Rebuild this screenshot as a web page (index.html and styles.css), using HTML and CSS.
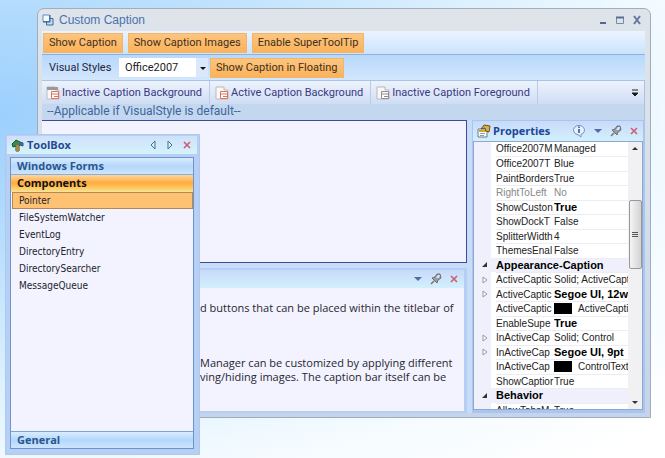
FILE: index.html
```html
<!DOCTYPE html>
<html lang="en">
<head>
<meta charset="utf-8">
<title>Custom Caption</title>
<link rel="stylesheet" href="styles.css">
</head>
<body>
<svg class="defs" aria-hidden="true">
  <symbol id="pin" viewBox="0 0 12 12"><path d="M1 11 4 8" stroke="#777" stroke-width="1.6"/><path d="M2 5 7 10 8 7 11 5 10 1 7 1 5 4Z" fill="#9a9ca3" stroke="#6b6e77"/><path d="M6 5 8 2H10L9 5Z" fill="#dfe4ee"/></symbol>
  <symbol id="close" viewBox="0 0 10 10"><path d="M2 2 8 8M8 2 2 8" stroke="#cf5c72" stroke-width="1.6"/></symbol>
  <symbol id="down" viewBox="0 0 10 10"><path d="M1 3H9L5 7Z" fill="#4b6da8"/></symbol>
  <symbol id="sheet" viewBox="0 0 14 14"><path d="M1 1H9V4H13V13H1Z" fill="#fbf7f5" stroke="#b9b9bd"/><path d="M5.5 5.5H12.500V12.500H5.500ZM5.500 8H12.500M8 10.500H12" fill="#fff" stroke="currentColor"/></symbol>
</svg>

<main class="window">
  <header class="titlebar">
    <svg class="app-icon" viewBox="0 0 12 12"><path d="M4.500 4.500H11V11H4.500Z" fill="#c5dbf0" stroke="#3b699d"/><path d="M1 1H7.500V7.500H1Z" fill="#f5faff" stroke="#658db8"/><path d="M1 8H8V1" fill="none" stroke="#315f94"/></svg>
    <h1>Custom Caption</h1>
    <div class="window-buttons">
      <button aria-label="Minimize"><svg viewBox="0 0 10 10"><path d="M2 8H8" stroke="#596687" stroke-width="2"/></svg></button>
      <button aria-label="Maximize"><svg viewBox="0 0 10 10"><path d="M1.500 2V8.500H8.500V2" fill="none" stroke="#7a8aa8"/><path d="M1 2.500H9" stroke="#596f92" stroke-width="2"/></svg></button>
      <button aria-label="Close"><svg viewBox="0 0 10 10"><path d="M2 1 8 9M8 1 2 9" stroke="#68779e" stroke-width="2"/></svg></button>
    </div>
  </header>

  <div class="toolbar captions">
    <button class="toggle">Show Caption</button>
    <button class="toggle">Show Caption Images</button>
    <button class="toggle">Enable SuperToolTip</button>
  </div>
  <div class="toolbar visual">
    <label for="style">Visual Styles</label>
    <span class="picker"><select id="style"><option>Office2007</option></select><svg viewBox="0 0 10 10"><path d="M2 4H8L5 7Z" fill="#111"/></svg></span>
    <button class="toggle">Show Caption in Floating</button>
  </div>
  <div class="brushes">
    <div class="brush-row">
      <button><svg><use href="#sheet"/><path d="M1 1H12V4H1Z" fill="#999"/></svg>Inactive Caption Background</button>
      <button><svg><use href="#sheet"/></svg>Active Caption Background</button>
      <button><svg class="gray"><use href="#sheet"/></svg>Inactive Caption Foreground</button>
      <button class="overflow" aria-label="More"><svg viewBox="0 0 8 8"><path d="M1 1H7M1 4H7L4 7Z" stroke="#222" fill="#111"/></svg></button>
    </div>
    <p class="note">--Applicable if VisualStyle is default--</p>
  </div>

  <div class="workspace">
    <div class="left">
      <section class="canvas"></section>
      <section class="description">
        <header class="pane-head">
          <button aria-label="Menu"><svg><use href="#down"/></svg></button>
          <button aria-label="Auto hide"><svg class="pin"><use href="#pin"/></svg></button>
          <button aria-label="Close"><svg><use href="#close"/></svg></button>
        </header>
        <div class="copy">
          <p>d buttons that can be placed within the titlebar of</p>
          <p>Manager can be customized by applying different<br>ving/hiding images. The caption bar itself can be</p>
        </div>
      </section>
    </div>
    <section class="properties">
      <header class="pane-head">
        <svg class="prop-icon" viewBox="0 0 14 14"><path d="M1 5H10V13H1Z" fill="#fff" stroke="#687991"/><path d="M2 7H9" stroke="#d4a52c" stroke-width="2"/><path d="M3 9.500H8M3 11.500H7" stroke="#8b9aab"/><path d="M4 5 7 1 13 2 12 8 9 7 8 4Z" fill="#d7b346" stroke="#66521e"/></svg>
        <h2>Properties</h2>
        <button aria-label="Information"><svg class="info" viewBox="0 0 14 14"><path d="M5 10.500A5.500 4.700 0 1 1 9 10.500L9 13 6 10.700Z" fill="#e6f0ff" stroke="#778fb7"/><path d="M7 2.500V4M7 5V9" stroke="#2855b5" stroke-width="1.600"/></svg></button>
        <button aria-label="Menu"><svg><use href="#down"/></svg></button>
        <button aria-label="Auto hide"><svg class="pin"><use href="#pin"/></svg></button>
        <button aria-label="Close"><svg><use href="#close"/></svg></button>
      </header>
      <div class="grid-area">
        <div class="grid-clip">
        <table>
          <colgroup><col class="c-mark"><col class="c-name"><col></colgroup>
          <tbody>
          <tr><td></td><td>Office2007M</td><td>Managed</td></tr>
          <tr><td></td><td>Office2007T</td><td>Blue</td></tr>
          <tr><td></td><td>PaintBorders</td><td>True</td></tr>
          <tr class="off"><td></td><td>RightToLeft</td><td>No</td></tr>
          <tr><td></td><td>ShowCuston</td><td><b>True</b></td></tr>
          <tr><td></td><td>ShowDockT</td><td>False</td></tr>
          <tr><td></td><td>SplitterWidth</td><td>4</td></tr>
          <tr><td></td><td>ThemesEnal</td><td>False</td></tr>
          <tr class="group"><td><svg viewBox="0 0 8 8"><path d="M6 1V6H1Z" fill="#333"/></svg></td><th colspan="2">Appearance-Caption</th></tr>
          <tr><td><svg viewBox="0 0 8 8"><path d="M2 1 6 4 2 7Z" fill="#fff" stroke="#999"/></svg></td><td>ActiveCaptic</td><td>Solid; ActiveCapt</td></tr>
          <tr><td><svg viewBox="0 0 8 8"><path d="M2 1 6 4 2 7Z" fill="#fff" stroke="#999"/></svg></td><td>ActiveCaptic</td><td><b>Segoe UI, 12w</b></td></tr>
          <tr><td></td><td>ActiveCaptic</td><td><i class="swatch"></i>ActiveCapti</td></tr>
          <tr><td></td><td>EnableSupe</td><td><b>True</b></td></tr>
          <tr><td><svg viewBox="0 0 8 8"><path d="M2 1 6 4 2 7Z" fill="#fff" stroke="#999"/></svg></td><td>InActiveCap</td><td>Solid; Control</td></tr>
          <tr><td><svg viewBox="0 0 8 8"><path d="M2 1 6 4 2 7Z" fill="#fff" stroke="#999"/></svg></td><td>InActiveCap</td><td><b>Segoe UI, 9pt</b></td></tr>
          <tr><td></td><td>InActiveCap</td><td><i class="swatch"></i>ControlText</td></tr>
          <tr><td></td><td>ShowCaptior</td><td>True</td></tr>
          <tr class="group"><td><svg viewBox="0 0 8 8"><path d="M6 1V6H1Z" fill="#333"/></svg></td><th colspan="2">Behavior</th></tr>
          <tr><td></td><td>AllowTabsM</td><td>True</td></tr>
          </tbody>
        </table>
        </div>
        <div class="scrollbar">
          <svg viewBox="0 0 8 8"><path d="M1 5H7L4 2Z" fill="#333"/></svg>
          <span class="track"><span class="thumb"><i></i><i></i><i></i></span></span>
          <svg viewBox="0 0 8 8"><path d="M1 3H7L4 6Z" fill="#333"/></svg>
        </div>
      </div>
    </section>
  </div>
</main>

<aside class="toolbox">
  <header class="tool-head">
    <svg class="tool-icon" viewBox="0 0 13 13"><path d="M1 5 5 1 9 3 12 4V7L9 6 8 7V12H5V7L2 8Z" fill="#339143" stroke="#24532d"/><path d="M5 6H8V12H5Z" fill="#b28242"/><path d="M8 3 12 4V7L8 6Z" fill="#4266aa"/></svg>
    <h2>ToolBox</h2>
    <button aria-label="Previous"><svg viewBox="0 0 10 10"><path d="M7 1V9L3 5Z" fill="#d5f2fb" stroke="#3d7199"/></svg></button>
    <button aria-label="Next"><svg viewBox="0 0 10 10"><path d="M3 1V9L7 5Z" fill="#d5f2fb" stroke="#3d7199"/></svg></button>
    <button aria-label="Close"><svg><use href="#close"/></svg></button>
  </header>
  <div class="tool-body">
    <button class="band">Windows Forms</button>
    <button class="band active">Components</button>
    <ul>
      <li class="selected">Pointer</li>
      <li>FileSystemWatcher</li>
      <li>EventLog</li>
      <li>DirectoryEntry</li>
      <li>DirectorySearcher</li>
      <li>MessageQueue</li>
    </ul>
    <button class="band last">General</button>
  </div>
</aside>
</body>
</html>
```
FILE: styles.css
```css
* { box-sizing: border-box; }
body {
  margin: 0;
  min-height: 100vh;
  padding: 8px 14px 40px 37px;
  display: flex;
  background: radial-gradient(ellipse at 0 25%, #9dd0fd 0, #b0dafd 20%, #d9effe 52%, #f4fbff 75%, #fff 95%);
  font: 11px/14px Roboto, sans-serif;
  color: #1c2440;
}
h1, h2, p, ul { margin: 0; padding: 0; }
h1, h2 { font-weight: 400; }
svg { display: block; flex: none; width: 10px; height: 10px; fill: none; }
.defs { position: absolute; width: 0; height: 0; }
button { border: 0; padding: 0; margin: 0; background: none; font: inherit; color: inherit; display: flex; align-items: center; white-space: nowrap; }

.window {
  flex: 1;
  min-width: 0;
  display: flex;
  flex-direction: column;
  border: 1px solid #a2adbc;
  border-radius: 7px 7px 0 0;
  background: linear-gradient(#dee4ea 0, #d7dfea 40%, #c5d4ea 100%);
  padding: 0 5px 4px 4px;
}
.titlebar { height: 22px; display: flex; align-items: center; gap: 5px; font-family: "Liberation Sans", sans-serif; }
.titlebar h1 { flex: 1; font-size: 12px; color: #4a72ae; }
.app-icon { width: 12px; height: 12px; }
.window-buttons { display: flex; gap: 7px; padding-right: 3px; }

.toolbar { display: flex; align-items: center; }
.captions { height: 24px; gap: 5px; padding-left: 1px; background: linear-gradient(#eaf4ff, #cbe3fc); border-bottom: 1px solid #8fb2dc; }
.visual { height: 25px; background: linear-gradient(#b8d8fb, #d3e7fd); padding-left: 7px; }
.toggle { height: 20px; padding: 0 5px; background: linear-gradient(#fdc57f, #fbb25a); border: 1px solid #f0b568; color: #40301c; }
.visual label { width: 70px; }
.picker { display: flex; align-items: center; width: 89px; height: 19px; background: linear-gradient(90deg, #fff 77px, #d9e9fb 77px); margin-right: 2px; }
.picker select { appearance: none; flex: 1; border: 0; background: none; padding: 0 0 0 6px; height: 19px; font: inherit; color: #1b1b24; }

.brushes { border: 1px solid #a9c3e4; border-width: 1px 1px 0 0; }
.brush-row { height: 23px; display: flex; align-items: stretch; background: linear-gradient(#edf3fd, #cfddf4); color: #39397f; padding-left: 4px; }
.brush-row button { gap: 2px; padding-right: 7px; margin-right: 5px; border-right: 1px solid #bccbe2; }
.brush-row svg { width: 14px; height: 14px; color: #e0715a; }
.brush-row .gray { color: #8d8d95; }
.brush-row .overflow { margin: 0 0 0 auto; padding-right: 5px; border: 0; }
.brush-row .overflow svg { width: 8px; height: 8px; }
.note { height: 16px; padding-left: 5px; color: #3f649d; background: #c3d8ef; font: 12px/14px Roboto, sans-serif; }

.workspace { flex: 1; min-height: 0; display: flex; gap: 5px; background: #c9dcf7; }
.left { flex: 1; min-width: 0; display: flex; flex-direction: column; gap: 5px; }
.canvas { flex: 0 0 143px; background: #f3f3ff; border: 1px solid #3b4b9d; border-left: 0; }
.description { flex: 1; background: #f3f3ff; border: 2px solid #b5cff4; border-width: 2px 3px 2px 0; }
.pane-head { display: flex; align-items: center; justify-content: flex-end; height: 18px; gap: 7px; padding-right: 5px; background: linear-gradient(#c8dafa, #d3f0fd); }
.pane-head .pin { width: 12px; height: 12px; }
.copy { padding: 13px 0 0 158px; font: 11px/14px "Open Sans", sans-serif; color: #26262e; white-space: nowrap; }
.copy p { margin-bottom: 41px; }
.copy p + p { margin: 0; }

.properties { flex: 0 0 173px; display: flex; flex-direction: column; border: 1px solid #a9c6f0; border-width: 1px 2px 3px 1px; background: #b9d1f5; }
.properties .pane-head { height: 20px; gap: 7px; padding: 0 4px; flex: none; }
.properties h2 { flex: 1; margin-left: -5px; font: 700 11px/14px "Open Sans", sans-serif; color: #1d4694; }
.prop-icon, .info { width: 14px; height: 14px; }
.grid-area { flex: 1 1 0; min-height: 0; display: flex; background: #fff; border: 1px solid #8ea9cf; }
.grid-clip { flex: 1; min-width: 0; overflow: hidden; }
table { width: 100%; table-layout: fixed; border-collapse: collapse; font: 10px/13px "Liberation Sans", sans-serif; color: #222; }
.c-mark { width: 22px; }
.c-name { width: 58px; }
tr { height: 14px; }
tr:nth-child(even) { height: 15px; }
td, th { padding: 0; overflow: hidden; white-space: nowrap; text-align: left; border-bottom: 1px solid #ececf2; }
td:first-child { padding-left: 7px; background: linear-gradient(90deg, #f0f0fc 17px, #fff 17px); border-bottom: 0; }
td svg { width: 8px; height: 8px; }
.group td:first-child, .group th { background: #f0f0fc; }
.group th, td b { font-size: 11px; color: #000; }
.off { color: #888; }
.swatch { display: inline-block; width: 18px; height: 11px; margin-right: 6px; vertical-align: -2px; background: #000; }
.scrollbar { width: 14px; display: flex; flex-direction: column; align-items: center; padding: 3px 0; background: #f1f1f3; }
.scrollbar svg { width: 8px; height: 8px; }
.track { flex: 1; width: 13px; padding-top: 47px; }
.thumb { display: flex; flex-direction: column; align-items: center; justify-content: center; gap: 1px; height: 69px; border: 1px solid #989898; border-radius: 2px; background: linear-gradient(90deg, #f5f5f5, #d3d3d6); }
.thumb i { width: 6px; height: 1px; background: #555; }

.toolbox {
  position: absolute;
  left: 5px;
  top: 134px;
  width: 195px;
  height: 321px;
  display: flex;
  flex-direction: column;
  padding: 1px 5px 5px 4px;
  background: #b6cff5;
  border: 1px solid #b1c8ee;
  font-family: "DejaVu Sans Condensed", "DejaVu Sans", sans-serif;
}
.tool-head { height: 18px; margin: 0 -3px; padding: 0 5px 0 4px; display: flex; align-items: center; gap: 7px; background: linear-gradient(#cfe0fa, #d5f3fb); }
.tool-head h2 { flex: 1; margin-left: -4px; font: 700 11px/14px "Open Sans", sans-serif; color: #234b8d; }
.tool-icon { width: 13px; height: 13px; }
.tool-body { flex: 1; margin-top: 3px; display: flex; flex-direction: column; background: #f3f3ff; border: 1px solid #6d93c9; }
.band { height: 17px; flex: none; padding-left: 6px; font: 700 11px/14px "Open Sans", sans-serif; color: #2a568f; background: linear-gradient(#d9ecff, #b4d7fb 50%, #cbe6ff); border-bottom: 1px solid #88aedc; }
.active { color: #111; background: linear-gradient(#ffd69a, #ffab3f 50%, #ffdc78); border-bottom-color: #eee3b0; }
.last { border: 0; border-top: 1px solid #7fa5d3; }
ul { flex: 1; list-style: none; font-size: 10px; color: #22222c; }
li { display: flex; align-items: center; height: 17px; padding-left: 8px; }
.selected { margin-left: 1px; padding-left: 6px; background: #ffc273; border: 1px solid #b28a55; }
```
